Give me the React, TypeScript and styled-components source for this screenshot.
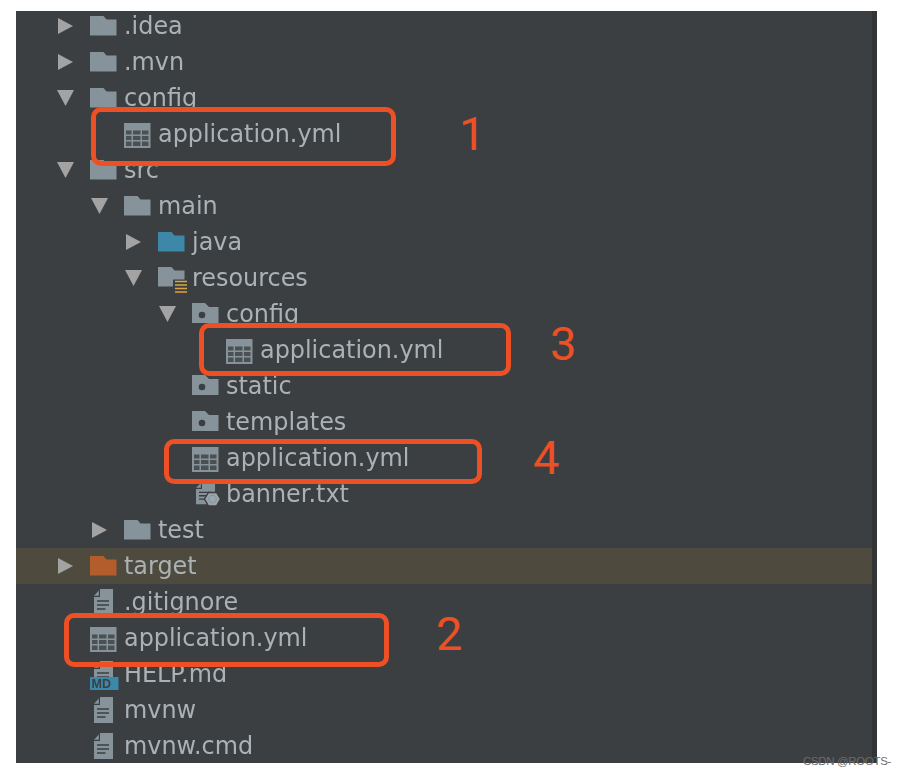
import React from "react";
import styled, { createGlobalStyle } from "styled-components";

type Kind = "folder" | "java" | "target" | "resources" | "dot" | "table" | "file" | "banner" | "md";

type Node = {
  name: string;
  level: number;
  kind: Kind;
  arrow?: "right" | "down";
  marked?: boolean;
};

const nodes: Node[] = [
  { name: ".idea", level: 0, kind: "folder", arrow: "right" },
  { name: ".mvn", level: 0, kind: "folder", arrow: "right" },
  { name: "config", level: 0, kind: "folder", arrow: "down" },
  { name: "application.yml", level: 1, kind: "table" },
  { name: "src", level: 0, kind: "folder", arrow: "down" },
  { name: "main", level: 1, kind: "folder", arrow: "down" },
  { name: "java", level: 2, kind: "java", arrow: "right" },
  { name: "resources", level: 2, kind: "resources", arrow: "down" },
  { name: "config", level: 3, kind: "dot", arrow: "down" },
  { name: "application.yml", level: 4, kind: "table" },
  { name: "static", level: 3, kind: "dot" },
  { name: "templates", level: 3, kind: "dot" },
  { name: "application.yml", level: 3, kind: "table" },
  { name: "banner.txt", level: 3, kind: "banner" },
  { name: "test", level: 1, kind: "folder", arrow: "right" },
  { name: "target", level: 0, kind: "target", arrow: "right", marked: true },
  { name: ".gitignore", level: 0, kind: "file" },
  { name: "application.yml", level: 0, kind: "table" },
  { name: "HELP.md", level: 0, kind: "md" },
  { name: "mvnw", level: 0, kind: "file" },
  { name: "mvnw.cmd", level: 0, kind: "file" },
];

// red boxes and numbers drawn over the tree
const boxes = [
  { left: 91, top: 107, width: 305, height: 59 },
  { left: 64, top: 613, width: 325, height: 54 },
  { left: 199, top: 323, width: 312, height: 53 },
  { left: 164, top: 439, width: 318, height: 45 },
];

const numbers = [
  { label: "1", left: 459, top: 107 },
  { label: "2", left: 436, top: 607 },
  { label: "3", left: 550, top: 317 },
  { label: "4", left: 533, top: 431 },
];

const GREY = "#87939a";
const DARK = "#3c3f41";

const FolderShape = ({ color }: { color: string }) => (
  <path d="M0 0H13.5L16.5 3.5H26.5V19.5H0Z" fill={color} />
);

// 19 x 26 document with a folded corner
const FileShape = () => (
  <>
    <path d="M6 0H19V26H0V8H6Z" fill={GREY} />
    <path d="M4.8 1.5V6.8H0Z" fill={GREY} />
    <path d="M3 12H15M3 16H15M3 20H11.5" stroke={DARK} strokeWidth="1.5" fill="none" />
  </>
);

const Icon = ({ kind }: { kind: Kind }) => {
  switch (kind) {
    case "folder":
      return (
        <Glyph $top={8} width="27" height="20" viewBox="0 0 27 20">
          <FolderShape color={GREY} />
        </Glyph>
      );
    case "java":
      return (
        <Glyph $top={8} width="27" height="20" viewBox="0 0 27 20">
          <FolderShape color="#3d88a8" />
        </Glyph>
      );
    case "target":
      return (
        <Glyph $top={8} width="27" height="20" viewBox="0 0 27 20">
          <FolderShape color="#b35c2c" />
        </Glyph>
      );
    case "resources":
      return (
        <Glyph $top={7} width="30" height="27" viewBox="0 0 30 27">
          <path d="M0 0H13.5L16.5 3.5H26.5V12.5H15V19.5H0Z" fill={GREY} />
          <path d="M17 14.5H29M17 18H29M17 21.5H29M17 25H29" stroke="#dba544" strokeWidth="1.7" />
        </Glyph>
      );
    case "dot":
      return (
        <Glyph $top={7} width="27" height="21" viewBox="0 0 27 21">
          <path d="M0 0H13L17 4H26.5V20H0Z" fill={GREY} />
          <circle cx="10" cy="12" r="3.3" fill={DARK} />
        </Glyph>
      );
    case "table":
      return (
        <Glyph $top={7} width="27" height="25" viewBox="0 0 27 25">
          <rect width="26.5" height="25" fill={GREY} />
          <path
            d="M2 7.5H7.5V11.5H2ZM9 7.5H16.5V11.5H9ZM18 7.5H24.5V11.5H18ZM2 13H7.5V17H2ZM9 13H16.5V17H9ZM18 13H24.5V17H18ZM2 18.5H7.5V23H2ZM9 18.5H16.5V23H9ZM18 18.5H24.5V23H18Z"
            fill="#4b5053"
          />
        </Glyph>
      );
    case "file":
      return (
        <Glyph $top={5} $left={4} width="19" height="26" viewBox="0 0 19 26">
          <FileShape />
        </Glyph>
      );
    case "banner":
      return (
        <Glyph $top={6} $left={4} width="25" height="25" viewBox="0 0 25 25">
          <g transform="scale(1 0.86)">
            <FileShape />
          </g>
          <path d="M12.5 10.5H20.5L24.5 17L20.5 24H12.5L8.5 17Z" fill="#9aa6ad" stroke={DARK} strokeWidth="1.4" />
          <circle cx="16.5" cy="17" r="3.8" fill="none" stroke={GREY} strokeWidth="1.1" />
        </Glyph>
      );
    case "md":
      return (
        <Glyph $top={5} width="29" height="29" viewBox="0 0 29 29">
          <g transform="translate(4 0)">
            <FileShape />
          </g>
          <rect y="16" width="28.5" height="13" fill="#3d88a8" />
          <text x="1.5" y="27" fontFamily="Liberation Sans, sans-serif" fontWeight="700" fontSize="12.5" fill={DARK}>
            MD
          </text>
        </Glyph>
      );
  }
};

const Arrow = ({ dir }: { dir: "right" | "down" }) => (
  <svg width="18" height="18" viewBox="0 0 18 18">
    {dir === "right" ? (
      <path d="M1 1L16 9L1 17Z" fill="#a3a3a3" />
    ) : (
      <path d="M0 1H17L8.5 17Z" fill="#a3a3a3" />
    )}
  </svg>
);

export default function App() {
  return (
    <Page>
      <GlobalStyle />
      <Panel>
        <Tree>
          {nodes.map((node, i) => (
            <Row key={i} $level={node.level} $marked={node.marked}>
              <ArrowSlot>{node.arrow && <Arrow dir={node.arrow} />}</ArrowSlot>
              <IconSlot>
                <Icon kind={node.kind} />
              </IconSlot>
              <Name>{node.name}</Name>
            </Row>
          ))}
        </Tree>
        <ScrollStrip />
      </Panel>
      {boxes.map((b, i) => (
        <RedBox key={i} $left={b.left} $top={b.top} $width={b.width} $height={b.height} />
      ))}
      {numbers.map((n) => (
        <RedNumber key={n.label} $left={n.left} $top={n.top}>
          {n.label}
        </RedNumber>
      ))}
      <Watermark>CSDN @ROOTS-</Watermark>
    </Page>
  );
}

const GlobalStyle = createGlobalStyle`
  html, body {
    margin: 0;
    padding: 0;
    background: #fff;
  }
`;

const Page = styled.div`
  position: relative;
  width: 902px;
  height: 775px;
  padding: 11px 0 0 16px;
  box-sizing: border-box;
  overflow: hidden;
`;

const Panel = styled.div`
  display: flex;
  width: 861px;
  height: 752px;
  overflow: hidden;
  background: #3c3f41;
`;

const Tree = styled.div`
  flex: 1;
  margin-top: -3px;
  filter: blur(0.35px);
`;

const ScrollStrip = styled.div`
  width: 5px;
  background: #333435;
`;

const Row = styled.div<{ $level: number; $marked?: boolean }>`
  display: flex;
  align-items: center;
  height: 36px;
  padding-left: ${(p) => 41 + p.$level * 34}px;
  background: ${(p) => (p.$marked ? "#4e4a3d" : "transparent")};
`;

const ArrowSlot = styled.div`
  display: flex;
  align-items: center;
  width: 33px;
  flex-shrink: 0;
`;

const IconSlot = styled.div`
  display: flex;
  align-items: flex-start;
  width: 34px;
  height: 36px;
  flex-shrink: 0;
`;

const Glyph = styled.svg<{ $top: number; $left?: number }>`
  flex-shrink: 0;
  margin-top: ${(p) => p.$top}px;
  margin-left: ${(p) => p.$left ?? 0}px;
`;

const Name = styled.span`
  font-family: "DejaVu Sans", sans-serif;
  font-size: 23.9px;
  line-height: 36px;
  color: #abb2b6;
  white-space: nowrap;
`;

const RedBox = styled.div<{ $left: number; $top: number; $width: number; $height: number }>`
  position: absolute;
  left: ${(p) => p.$left}px;
  top: ${(p) => p.$top}px;
  width: ${(p) => p.$width}px;
  height: ${(p) => p.$height}px;
  box-sizing: border-box;
  border: 5px solid #ec5024;
  border-radius: 10px;
`;

const RedNumber = styled.div<{ $left: number; $top: number }>`
  position: absolute;
  left: ${(p) => p.$left}px;
  top: ${(p) => p.$top}px;
  font-family: "Roboto", sans-serif;
  font-weight: 400;
  font-size: 47px;
  line-height: 54px;
  color: #ec5024;
`;

const Watermark = styled.div`
  position: absolute;
  left: 803px;
  top: 754px;
  font-family: "Liberation Sans", sans-serif;
  font-size: 11.5px;
  letter-spacing: -0.35px;
  line-height: 14px;
  color: #6b6b6b;
  white-space: nowrap;
`;
